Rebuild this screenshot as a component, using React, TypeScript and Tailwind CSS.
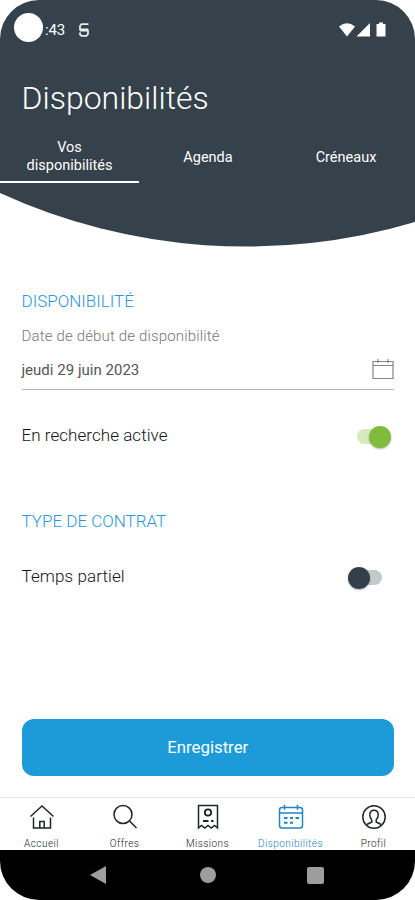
import type { ReactNode } from "react";

const NAV_ITEMS = [
  { label: "Accueil", icon: <HomeIcon /> },
  { label: "Offres", icon: <SearchIcon /> },
  { label: "Missions", icon: <MissionIcon /> },
  { label: "Disponibilités", icon: <AgendaIcon />, active: true },
  { label: "Profil", icon: <ProfileIcon /> },
];

function Icon({ children }: { children: ReactNode }) {
  return (
    <svg
      viewBox="0 0 26 26"
      className="size-[26px]"
      fill="none"
      stroke="currentColor"
      strokeWidth="1.5"
    >
      {children}
    </svg>
  );
}

function HomeIcon() {
  return (
    <Icon>
      <path d="M1.5 12.5 13 2l11.5 10.5M4.5 13.5V24h17V13.5" />
      <path d="M10.8 24v-6.5h4.4V24" />
    </Icon>
  );
}

function SearchIcon() {
  return (
    <Icon>
      <circle cx="11" cy="10.5" r="9" />
      <path d="m17.5 17 7 7" />
    </Icon>
  );
}

function MissionIcon() {
  return (
    <Icon>
      <path d="M3.5 1.5h19V24l-3-2.5-3.2 2.5-3.3-2.5L9.7 24l-3.2-2.5-3 2.5z" />
      <circle cx="13" cy="8.5" r="3.2" strokeWidth="1.8" />
      <path strokeWidth="2" d="M8 17h5.5m2.5 0h2.5" />
    </Icon>
  );
}

function AgendaIcon() {
  return (
    <Icon>
      <rect x="1.5" y="3.5" width="23" height="20.5" rx="2.5" />
      <path d="M1.5 9h23M6.5 .8v5M19.5 .8v5" />
      <path strokeWidth="2" d="M6 14h3.5m2.5 0H15m2.5 0H21M6 18.8h3.5m2.5 0H15" />
    </Icon>
  );
}

function ProfileIcon() {
  return (
    <Icon>
      <circle cx="13" cy="13" r="11.2" />
      <path d="M10.8 15.8C9.5 14.5 8.8 13 8.8 11c0-3 1.7-4.8 4.2-4.8s4.2 1.8 4.2 4.8c0 2-.7 3.5-2 4.8V18l5 2.5M10.8 15.8V18l-5 2.500" />
    </Icon>
  );
}

function StatusBar() {
  return (
    <div className="flex h-[60px] items-center justify-between pl-[14px] pr-[28px]">
      <div className="flex items-center text-white">
        <span className="-mt-[6px] size-[29px] rounded-full bg-white" />
        <span className="ml-[2px] text-[15px] leading-none tracking-[-0.2px]">:43</span>
        <svg
          viewBox="0 0 12 14"
          className="ml-[13px] h-[14px] w-3"
          fill="none"
          stroke="#e8eaec"
          strokeWidth="1.8"
        >
          <path d="M10.5 1.2H3.500L2 3v3.500h7.500L10 8v3l-1.500 1.800h-5L2 11.500V9.500M2 7.500h8" />
        </svg>
      </div>
      <svg viewBox="0 0 48 16" className="h-4 w-12" fill="#fff">
        <path d="M0 4.5Q8 -2 16 4.5L8 14.5z" />
        <path d="M17.5 14.5 31 1v13.5z" />
        <path d="M40 .5h4V2h2.500v12.500h-9V2H40z" />
      </svg>
    </div>
  );
}

function Tabs() {
  return (
    <div className="grid h-[54px] grid-cols-[139px_138px_138px] text-center text-[14.5px] leading-[18px] text-white">
      <div className="flex items-center justify-center border-b-3 border-white pt-[3px]">
        <span>
          Vos
          <br />
          disponibilités
        </span>
      </div>
      <div className="flex items-center justify-center pt-[2px]">Agenda</div>
      <div className="flex items-center justify-center pt-[2px]">Créneaux</div>
    </div>
  );
}

function Switch({ on }: { on?: boolean }) {
  return on ? (
    <span className="mr-[3px] mt-px flex h-[15px] w-[34px] items-center justify-end rounded-full bg-[#d5ebbd]">
      <span className="size-[22px] rounded-full bg-[#80bb3d] shadow-[0_1px_2px_rgba(0,0,0,0.3)]" />
    </span>
  ) : (
    <span className="mr-[12px] mt-px flex h-[15px] w-[34px] items-center rounded-full bg-[#c5c9cc]">
      <span className="size-[22px] rounded-full bg-[#33404b] shadow-[0_1px_2px_rgba(0,0,0,0.3)]" />
    </span>
  );
}

export default function App() {
  return (
    <main className="flex h-[900px] w-[415px] flex-col overflow-hidden rounded-[39px] bg-white font-[Roboto,sans-serif]">
      <header className="bg-[#35414b]">
        <StatusBar />
        <h1 className="h-[70px] pl-[21.5px] pt-[17px] text-[32px] font-light leading-[42px] text-white">
          Disponibilités
        </h1>
        <Tabs />
      </header>
      <svg viewBox="0 0 415 66" className="-mt-px h-[66px] w-full shrink-0" fill="#35414b">
        <path d="M0 0H415V39A592 592 0 0 1 0 10Z" />
      </svg>

      <section className="flex flex-1 flex-col pl-[21.5px] pr-[21px] pt-[40px]">
        <h2 className="text-[17px] font-light leading-6 text-[#2b96dc]">DISPONIBILITÉ</h2>
        <p className="mt-[13px] text-[15px] font-light leading-5 tracking-[0.16px] text-[#777]">
          Date de début de disponibilité
        </p>
        <div className="mt-[6px] flex h-[38px] items-center justify-between border-b border-[#b5b5b5] text-[15px] text-[#555]">
          <span className="tracking-[0.02px]">jeudi 29 juin 2023</span>
          <svg
            viewBox="0 0 22 22"
            className="-mt-[3px] size-[22px]"
            fill="none"
            stroke="#858585"
            strokeWidth="1.2"
          >
            <path d="M1 3.5h20V20.5H1zM1 7.5h20M6 1v4M16 1v4" />
          </svg>
        </div>
        <div className="mt-[34px] flex h-6 items-center justify-between text-[17px] font-light text-[#111417]">
          <span className="tracking-[0.05px]">En recherche active</span>
          <Switch on />
        </div>
        <h2 className="mt-[61px] text-[17px] font-light leading-6 text-[#2b96dc]">
          TYPE DE CONTRAT
        </h2>
        <div className="mt-[32px] flex h-6 items-center justify-between text-[17px] font-light text-[#111417]">
          <span className="tracking-[0.1px]">Temps partiel</span>
          <Switch />
        </div>
      </section>

      <button className="mb-[21px] ml-[21.5px] mr-[21px] h-[57px] shrink-0 rounded-[12px] bg-[#1d9bd9] text-[16.8px] text-white">
        Enregistrer
      </button>

      <nav className="grid h-[53px] shrink-0 grid-cols-5 border-t border-[#e9ebec]">
        {NAV_ITEMS.map((item) => (
          <div
            key={item.label}
            className={
              item.active
                ? "flex flex-col items-center pt-[6px] text-[#2484c6]"
                : "flex flex-col items-center pt-[6px] text-[#202429]"
            }
          >
            {item.icon}
            <span className="mt-[7px] whitespace-nowrap text-[10px] font-light leading-[14px] tracking-[0.45px]">
              {item.label}
            </span>
          </div>
        ))}
      </nav>

      <footer className="flex h-[50px] shrink-0 items-center justify-between bg-black pl-[90px] pr-[91px]">
        <svg viewBox="0 0 16 18" className="h-[18px] w-4" fill="#9d9d9d">
          <path d="M0 9 16 0v18z" />
        </svg>
        <span className="ml-[2px] size-4 rounded-full bg-[#9d9d9d]" />
        <span className="size-[17px] rounded-[2px] bg-[#9d9d9d]" />
      </footer>
    </main>
  );
}
